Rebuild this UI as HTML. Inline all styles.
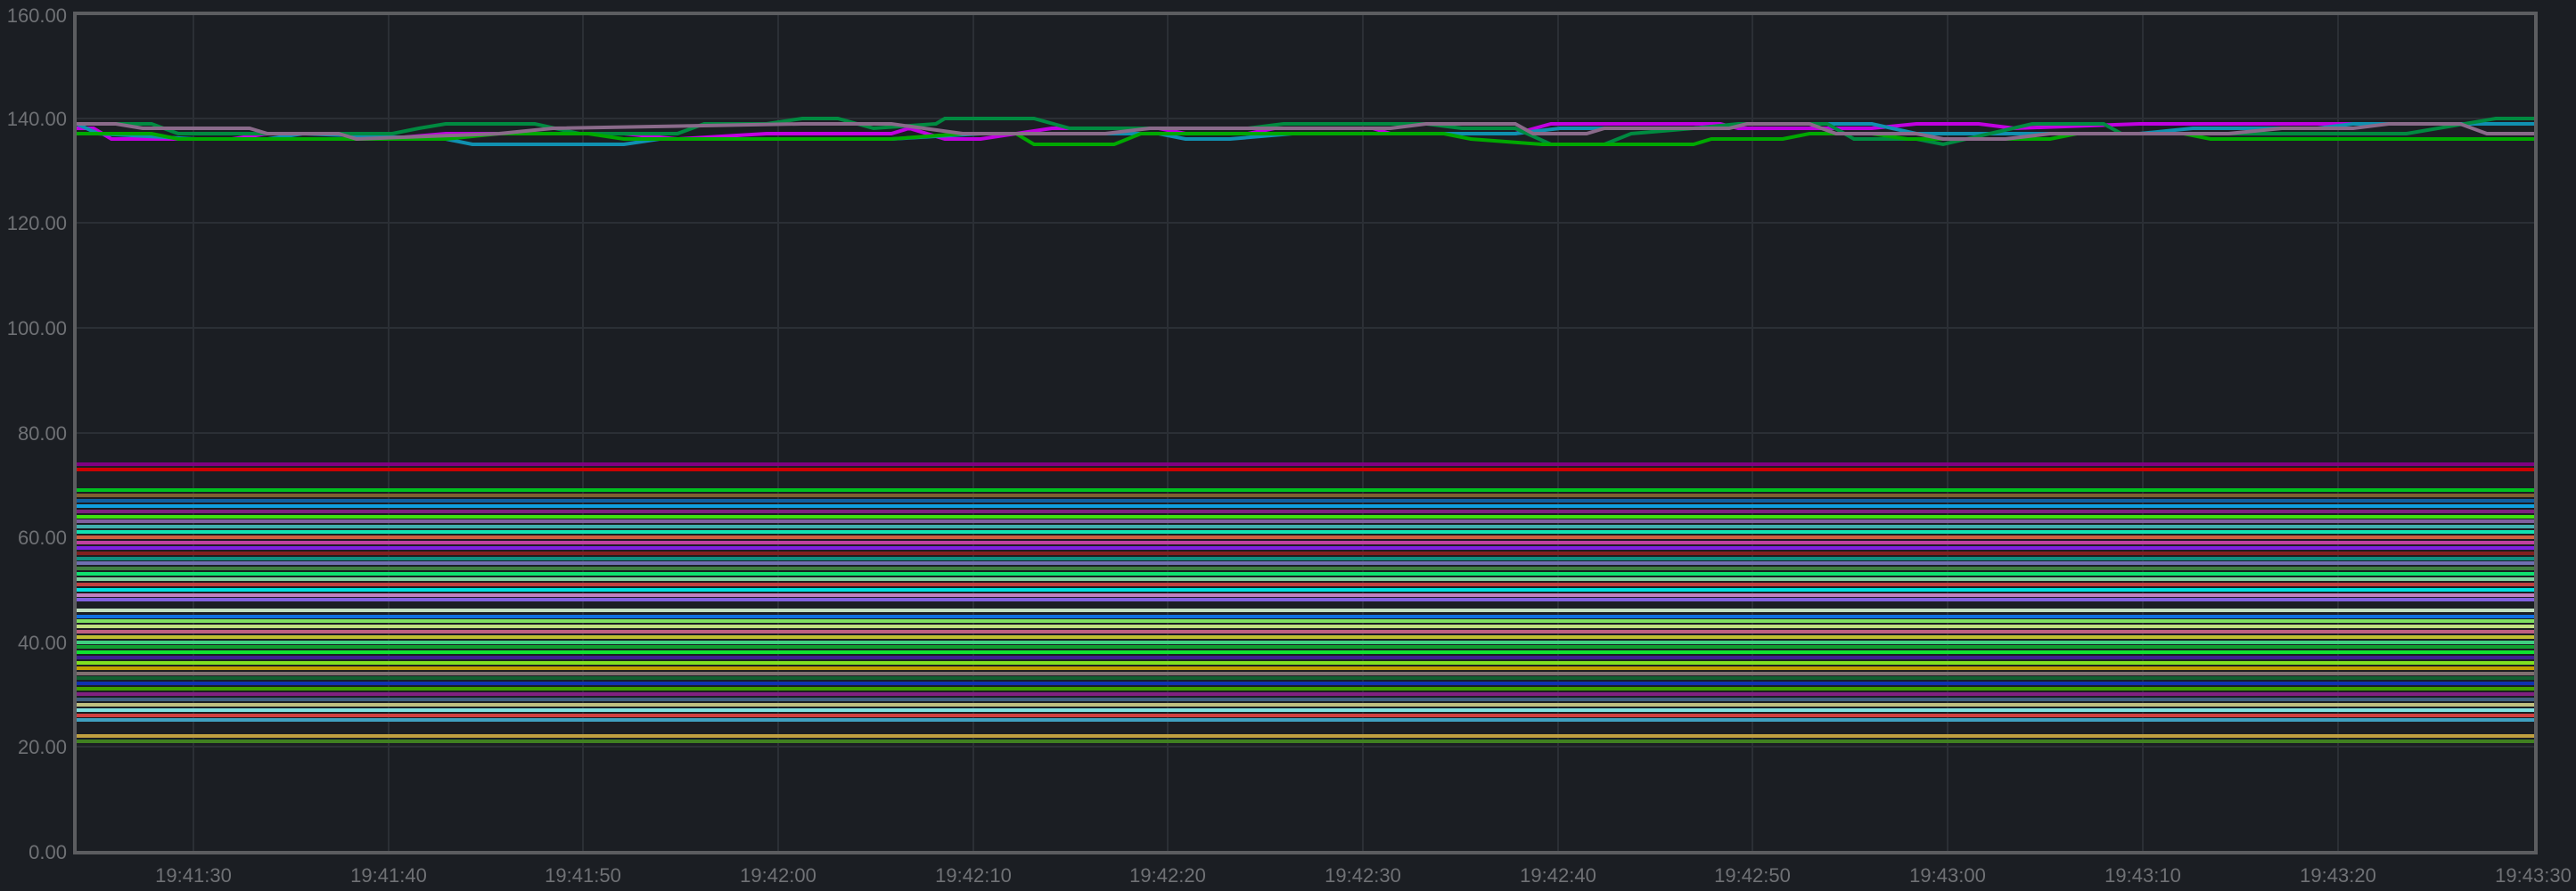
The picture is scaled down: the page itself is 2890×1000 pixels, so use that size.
<!DOCTYPE html>
<html><head><meta charset="utf-8"><style>
html,body{margin:0;padding:0;background:#1b1e23;}
svg{display:block;}
text{font-family:"Liberation Sans",sans-serif;font-size:22px;fill:#6f7175;}
</style></head><body>
<svg width="2890" height="1000" viewBox="0 0 2890 1000" xmlns="http://www.w3.org/2000/svg">
<rect width="2890" height="1000" fill="#1b1e23"/>
<g stroke="#2b2f35" stroke-width="2">
<line x1="86" y1="133" x2="2843" y2="133"/><line x1="86" y1="250" x2="2843" y2="250"/>
<line x1="86" y1="368" x2="2843" y2="368"/><line x1="86" y1="486" x2="2843" y2="486"/>
<line x1="86" y1="603" x2="2843" y2="603"/><line x1="86" y1="721" x2="2843" y2="721"/>
<line x1="86" y1="838" x2="2843" y2="838"/>
<line x1="217" y1="17" x2="217" y2="955"/><line x1="436" y1="17" x2="436" y2="955"/>
<line x1="654" y1="17" x2="654" y2="955"/><line x1="873" y1="17" x2="873" y2="955"/>
<line x1="1092" y1="17" x2="1092" y2="955"/><line x1="1310" y1="17" x2="1310" y2="955"/>
<line x1="1529" y1="17" x2="1529" y2="955"/><line x1="1748" y1="17" x2="1748" y2="955"/>
<line x1="1966" y1="17" x2="1966" y2="955"/><line x1="2185" y1="17" x2="2185" y2="955"/>
<line x1="2404" y1="17" x2="2404" y2="955"/><line x1="2623" y1="17" x2="2623" y2="955"/>
</g>
<g stroke-width="4" fill="none">
<polyline stroke="#c000e0" points="86,144 105,144 125,156 260,156 300,150 400,150 430,156 500,150 700,150 760,156 860,150 1000,150 1020,144 1060,156 1100,156 1180,144 1300,144 1330,150 1400,150 1430,144 1540,144 1560,150 1700,150 1740,139 1930,139 1950,144 2100,144 2150,139 2220,139 2260,144 2400,139 2700,139 2730,139 2843,139"/>
<polyline stroke="#1090b0" points="86,139 110,150 220,156 300,156 340,150 500,156 530,162 700,162 740,156 1000,156 1100,150 1300,150 1330,156 1380,156 1450,150 1700,150 1750,144 1900,144 1960,139 2100,139 2150,150 2400,150 2460,144 2600,144 2640,139 2843,139"/>
<polyline stroke="#008a40" points="86,139 170,139 200,150 300,150 440,150 470,144 500,139 600,139 650,150 760,150 790,139 860,139 900,133 940,133 980,144 1050,139 1060,133 1160,133 1200,144 1300,144 1400,144 1440,139 1560,139 1600,139 1640,144 1700,144 1740,162 1800,162 1830,150 1900,144 1950,139 2050,139 2080,156 2150,156 2180,162 2280,139 2360,139 2380,150 2700,150 2800,133 2843,133"/>
<polyline stroke="#00a800" points="86,150 170,150 200,156 500,156 560,150 660,150 700,156 1000,156 1080,150 1140,150 1160,162 1250,162 1280,150 1620,150 1650,156 1730,162 1900,162 1920,156 2000,156 2030,150 2100,150 2140,156 2300,156 2330,150 2450,150 2480,156 2843,156"/>
<polyline stroke="#8a6a8a" points="86,139 130,139 160,144 280,144 300,150 380,150 400,156 560,150 620,144 900,139 1000,139 1080,150 1240,150 1290,144 1560,144 1600,139 1700,139 1720,150 1780,150 1800,144 1940,144 1960,139 2030,139 2060,150 2150,150 2180,156 2250,156 2300,150 2500,150 2560,144 2640,144 2680,139 2760,139 2790,150 2843,150"/>
</g>
<g stroke-width="4">
<line x1="86" y1="521" x2="2843" y2="521" stroke="#800080"/>
<line x1="86" y1="527" x2="2843" y2="527" stroke="#cc0000"/>
<line x1="86" y1="550" x2="2843" y2="550" stroke="#00c020"/>
<line x1="86" y1="556" x2="2843" y2="556" stroke="#806030"/>
<line x1="86" y1="562" x2="2843" y2="562" stroke="#1060a0"/>
<line x1="86" y1="568" x2="2843" y2="568" stroke="#10a0e0"/>
<line x1="86" y1="574" x2="2843" y2="574" stroke="#802080"/>
<line x1="86" y1="580" x2="2843" y2="580" stroke="#40e010"/>
<line x1="86" y1="585" x2="2843" y2="585" stroke="#8060a0"/>
<line x1="86" y1="591" x2="2843" y2="591" stroke="#40b0b0"/>
<line x1="86" y1="597" x2="2843" y2="597" stroke="#10e0b0"/>
<line x1="86" y1="603" x2="2843" y2="603" stroke="#d06040"/>
<line x1="86" y1="609" x2="2843" y2="609" stroke="#c040a0"/>
<line x1="86" y1="615" x2="2843" y2="615" stroke="#8020e0"/>
<line x1="86" y1="621" x2="2843" y2="621" stroke="#802020"/>
<line x1="86" y1="627" x2="2843" y2="627" stroke="#109080"/>
<line x1="86" y1="632" x2="2843" y2="632" stroke="#7070b0"/>
<line x1="86" y1="638" x2="2843" y2="638" stroke="#408040"/>
<line x1="86" y1="644" x2="2843" y2="644" stroke="#10e070"/>
<line x1="86" y1="650" x2="2843" y2="650" stroke="#80d0a0"/>
<line x1="86" y1="656" x2="2843" y2="656" stroke="#c04040"/>
<line x1="86" y1="662" x2="2843" y2="662" stroke="#00e0e0"/>
<line x1="86" y1="668" x2="2843" y2="668" stroke="#c080c0"/>
<line x1="86" y1="673" x2="2843" y2="673" stroke="#8060e0"/>
<line x1="86" y1="685" x2="2843" y2="685" stroke="#c0e0c0"/>
<line x1="86" y1="692" x2="2843" y2="692" stroke="#1070e0"/>
<line x1="86" y1="697" x2="2843" y2="697" stroke="#80e060"/>
<line x1="86" y1="703" x2="2843" y2="703" stroke="#c0e080"/>
<line x1="86" y1="709" x2="2843" y2="709" stroke="#c06080"/>
<line x1="86" y1="715" x2="2843" y2="715" stroke="#c0c030"/>
<line x1="86" y1="721" x2="2843" y2="721" stroke="#40d080"/>
<line x1="86" y1="726" x2="2843" y2="726" stroke="#10a030"/>
<line x1="86" y1="732" x2="2843" y2="732" stroke="#10e030"/>
<line x1="86" y1="738" x2="2843" y2="738" stroke="#402090"/>
<line x1="86" y1="744" x2="2843" y2="744" stroke="#80e020"/>
<line x1="86" y1="750" x2="2843" y2="750" stroke="#c0a000"/>
<line x1="86" y1="756" x2="2843" y2="756" stroke="#807070"/>
<line x1="86" y1="761" x2="2843" y2="761" stroke="#106030"/>
<line x1="86" y1="767" x2="2843" y2="767" stroke="#1030b0"/>
<line x1="86" y1="773" x2="2843" y2="773" stroke="#40a000"/>
<line x1="86" y1="779" x2="2843" y2="779" stroke="#802080"/>
<line x1="86" y1="785" x2="2843" y2="785" stroke="#406080"/>
<line x1="86" y1="791" x2="2843" y2="791" stroke="#c0c080"/>
<line x1="86" y1="797" x2="2843" y2="797" stroke="#80e0e0"/>
<line x1="86" y1="803" x2="2843" y2="803" stroke="#d04040"/>
<line x1="86" y1="808" x2="2843" y2="808" stroke="#40a0c0"/>
<line x1="86" y1="826" x2="2843" y2="826" stroke="#c0a040"/>
<line x1="86" y1="832" x2="2843" y2="832" stroke="#408020"/>
</g>
<rect x="84" y="15" width="2761" height="942" fill="none" stroke="#5c5d60" stroke-width="4"/>
<g text-anchor="end">
<text x="75" y="25">160.00</text><text x="75" y="141">140.00</text>
<text x="75" y="258">120.00</text><text x="75" y="376">100.00</text>
<text x="75" y="494">80.00</text><text x="75" y="611">60.00</text>
<text x="75" y="729">40.00</text><text x="75" y="846">20.00</text>
<text x="75" y="964">0.00</text>
</g>
<g text-anchor="middle">
<text x="217" y="990">19:41:30</text><text x="436" y="990">19:41:40</text>
<text x="654" y="990">19:41:50</text><text x="873" y="990">19:42:00</text>
<text x="1092" y="990">19:42:10</text><text x="1310" y="990">19:42:20</text>
<text x="1529" y="990">19:42:30</text><text x="1748" y="990">19:42:40</text>
<text x="1966" y="990">19:42:50</text><text x="2185" y="990">19:43:00</text>
<text x="2404" y="990">19:43:10</text><text x="2623" y="990">19:43:20</text>
<text x="2842" y="990">19:43:30</text>
</g>
</svg>
</body></html>
